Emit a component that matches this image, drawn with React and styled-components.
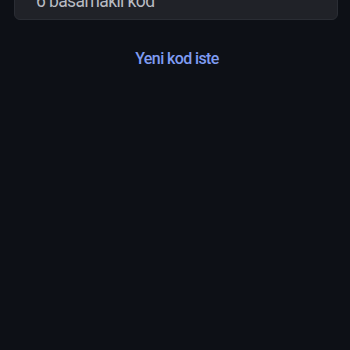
import React from "react";
import styled, { createGlobalStyle } from "styled-components";

const Global = createGlobalStyle`
  html, body { margin: 0; padding: 0; background: #0d1016; }
  body { font-family: Roboto, "Noto Sans", sans-serif; overflow: hidden; }
`;

const Page = styled.main`
  width: 350px;
  height: 350px;
  background: #0d1016;
  overflow: hidden;
`;

const Content = styled.div`
  display: flex;
  flex-direction: column;
  align-items: stretch;
  gap: 29px;
  padding: 0 12px 0 14px;
  margin-top: -36px;
`;

const CodeInput = styled.input`
  box-sizing: border-box;
  display: block;
  width: 100%;
  height: 56px;
  padding: 26px 20px 8px 21px;
  border: 1px solid #2a2d34;
  border-radius: 6px;
  background: #202228;
  color: #c9ccd2;
  font-family: Roboto, sans-serif;
  font-size: 17.5px;
  line-height: 20px;
  letter-spacing: -0.6px;
  outline: none;
  &::placeholder { color: #b9bcc3; opacity: 1; }
`;

const LinkButton = styled.button`
  align-self: center;
  background: none;
  border: none;
  padding: 0;
  margin-left: 2px;
  color: #7f9cf2;
  font-family: Roboto, sans-serif;
  font-size: 16px;
  line-height: 19px;
  letter-spacing: -0.6px;
  font-weight: 500;
  cursor: pointer;
`;

export default function App() {
  return (
    <Page>
      <Global />
      <Content>
        <CodeInput placeholder="6 basamaklı kod" inputMode="numeric" />
        <LinkButton>Yeni kod iste</LinkButton>
      </Content>
    </Page>
  );
}
